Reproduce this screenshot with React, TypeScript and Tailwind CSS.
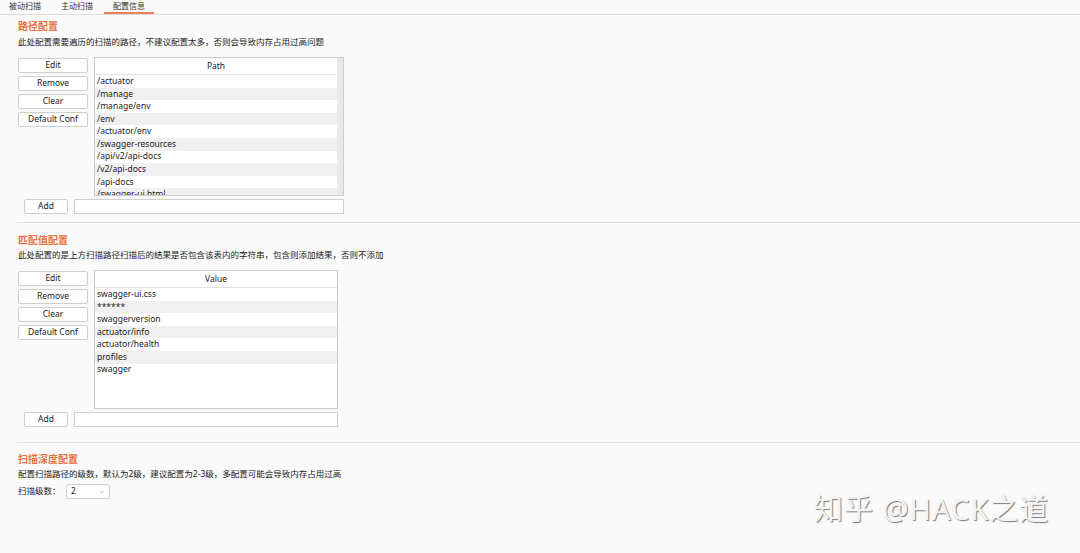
import { ChevronDown } from 'lucide-react';

const paths = [
  '/actuator',
  '/manage',
  '/manage/env',
  '/env',
  '/actuator/env',
  '/swagger-resources',
  '/api/v2/api-docs',
  '/v2/api-docs',
  '/api-docs',
  '/swagger-ui.html',
];

const values = [
  'swagger-ui.css',
  '******',
  'swaggerversion',
  'actuator/info',
  'actuator/health',
  'profiles',
  'swagger',
];

const font = "font-['Noto_Sans','Noto_Sans_CJK_SC',sans-serif]";

function SideButton({ label }: { label: string }) {
  return (
    <button className="h-[15px] w-[70px] rounded-[2px] border border-[#cfcfcf] bg-white text-[8.5px] leading-none text-[#222]">
      {label}
    </button>
  );
}

function ListPanel({
  header,
  rows,
  width,
  height,
  scroll,
}: {
  header: string;
  rows: string[];
  width: string;
  height: string;
  scroll?: boolean;
}) {
  return (
    <div className={`flex overflow-hidden border border-[#c9ced6] bg-white ${width} ${height}`}>
      <div className="flex min-w-0 flex-1 flex-col">
        <div className="flex h-[17px] shrink-0 items-center justify-center border-b border-[#e2e2e2] pt-[1px] text-[8.5px] text-[#222]">
          {header}
        </div>
        {rows.map((r, i) => (
          <div
            key={r}
            className={`flex h-[12.6px] shrink-0 items-center px-[2px] text-[8.5px] text-[#222] ${
              i % 2 === 1 ? 'bg-[#f0f0f0]' : 'bg-white'
            }`}
          >
            {r}
          </div>
        ))}
      </div>
      {scroll && <div className="w-[6px] shrink-0 bg-[#e8e8e8]" />}
    </div>
  );
}

function ConfigBlock({
  header,
  rows,
  tableW,
  tableH,
  inputW,
  scroll,
}: {
  header: string;
  rows: string[];
  tableW: string;
  tableH: string;
  inputW: string;
  scroll?: boolean;
}) {
  return (
    <div className="flex flex-col">
      <div className="flex gap-[6px]">
        <div className="flex flex-col gap-[3px] pt-[1px]">
          <SideButton label="Edit" />
          <SideButton label="Remove" />
          <SideButton label="Clear" />
          <SideButton label="Default Conf" />
        </div>
        <ListPanel header={header} rows={rows} width={tableW} height={tableH} scroll={scroll} />
      </div>
      <div className="mt-[3px] flex gap-[6px] pl-[6px]">
        <button className="h-[15px] w-[44px] rounded-[2px] border border-[#cfcfcf] bg-white text-[8.5px] leading-none text-[#222]">
          Add
        </button>
        <div className={`h-[15px] border border-[#cfcfcf] bg-white ${inputW}`} />
      </div>
    </div>
  );
}

export default function App() {
  return (
    <div className={`relative h-[553px] w-full overflow-hidden bg-[#fafafa] ${font}`}>
      {/* tabs */}
      <div className="flex h-[15px] items-end border-b border-[#dcdcdc] pl-[9px] text-[8px] text-[#333]">
        <div className="h-[14px] pr-[11px] leading-[12px]">被动扫描</div>
        <div className="h-[14px] pl-[9px] pr-[11px] leading-[12px]">主动扫描</div>
        <div className="h-[14px] border-b-2 border-[#e8815a] px-[9px] leading-[12px]">配置信息</div>
      </div>

      <div className="pl-[18px]">
        {/* 路径配置 */}
        <div className="mt-[4px] h-[14px] text-[10px] leading-[14px] font-bold text-[#e8703a]">路径配置</div>
        <div className="mt-[3px] h-[12px] text-[8.5px] leading-[12px] text-[#222]">
          此处配置需要遍历的扫描的路径，不建议配置太多，否则会导致内存占用过高问题
        </div>
        <div className="mt-[9px]">
          <ConfigBlock
            header="Path"
            rows={paths}
            tableW="w-[250px]"
            tableH="h-[139px]"
            inputW="w-[270px]"
            scroll
          />
        </div>
      </div>

      <div className="ml-[17px] mt-[8px] h-px bg-[#e0e0e0]" />

      <div className="pl-[18px]">
        {/* 匹配值配置 */}
        <div className="mt-[10px] h-[14px] text-[10px] leading-[14px] font-bold text-[#e8703a]">匹配值配置</div>
        <div className="mt-[2px] h-[12px] text-[8.5px] leading-[12px] text-[#222]">
          此处配置的是上方扫描路径扫描后的结果是否包含该表内的字符串，包含则添加结果，否则不添加
        </div>
        <div className="mt-[9px]">
          <ConfigBlock
            header="Value"
            rows={values}
            tableW="w-[244px]"
            tableH="h-[139px]"
            inputW="w-[264px]"
          />
        </div>
      </div>

      <div className="ml-[17px] mt-[15px] h-px bg-[#e0e0e0]" />

      <div className="pl-[18px]">
        {/* 扫描深度配置 */}
        <div className="mt-[9px] h-[14px] text-[10px] leading-[14px] font-bold text-[#e8703a]">扫描深度配置</div>
        <div className="mt-[2px] h-[12px] text-[8.5px] leading-[12px] text-[#222]">
          配置扫描路径的级数，默认为2级，建议配置为2-3级，多配置可能会导致内存占用过高
        </div>
        <div className="mt-[4px] flex h-[15px] items-center text-[8.5px] text-[#222]">
          <span className="w-[48px]">扫描级数：</span>
          <div className="flex h-[15px] w-[44px] items-center justify-between rounded-[2px] border border-[#d0d0d0] bg-white pl-[4px] pr-[3px]">
            <span>2</span>
            <ChevronDown className="h-[8px] w-[8px] text-[#888]" strokeWidth={1.5} />
          </div>
        </div>
      </div>

      {/* watermark */}
      <div className="absolute left-[814px] top-[491px] whitespace-nowrap text-[29px] leading-[36px] tracking-[1px] text-[#f4f4f4] [text-shadow:1px_1px_1px_rgba(0,0,0,0.5)]">
        知乎 @HACK之道
      </div>
    </div>
  );
}
